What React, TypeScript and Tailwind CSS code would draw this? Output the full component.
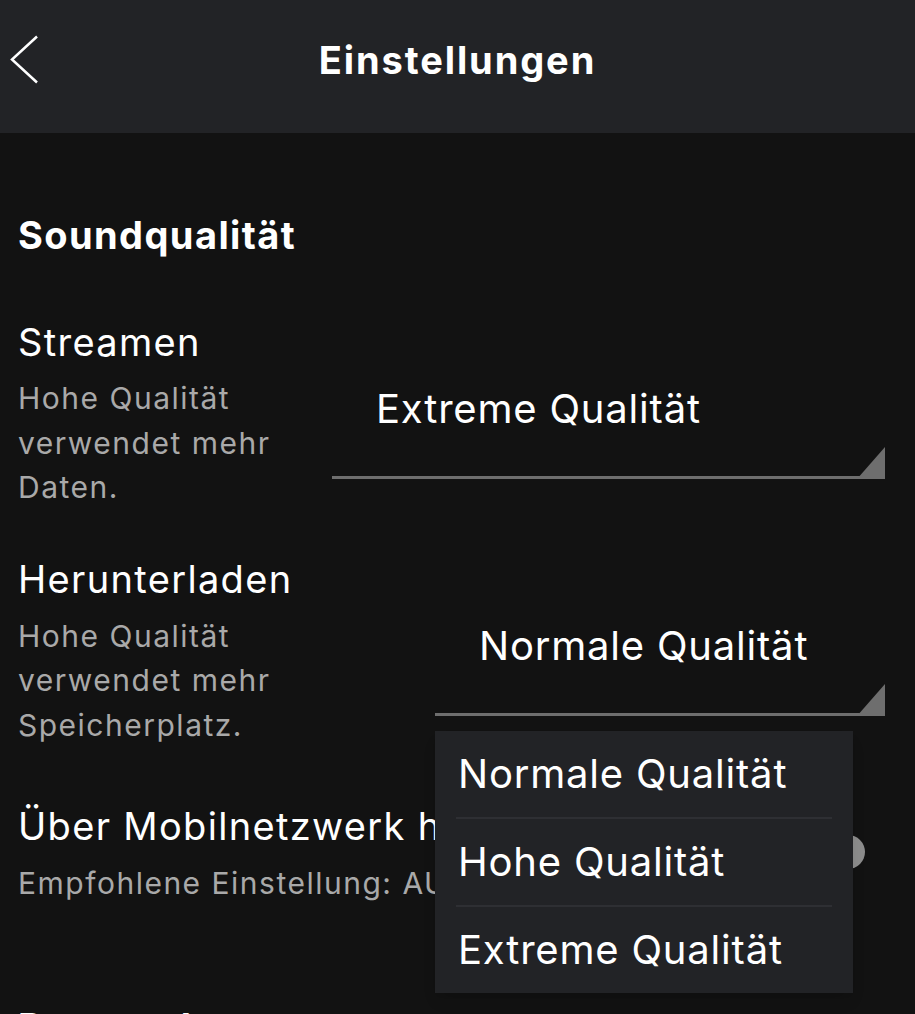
import React from 'react';

const font = { fontFamily: 'Inter, "Noto Sans", sans-serif' };

function Select({ value, width, children }: { value: string; width: string; children?: React.ReactNode }) {
  return (
    <div className={`relative ml-auto mt-[67px] shrink-0 self-start ${width}`}>
      <div className="pl-[44px] text-[40px] leading-[44px] tracking-[0.02em] text-white">{value}</div>
      <div className="h-[45px]" />
      <div className="h-[3px] bg-[#6e6e6e]" />
      <svg className="absolute right-0 bottom-0" width="28" height="32" viewBox="0 0 28 32">
        <polygon points="0,32 28,0 28,32" fill="#6e6e6e" />
      </svg>
      {children}
    </div>
  );
}

function Menu() {
  const items = ['Normale Qualität', 'Hohe Qualität', 'Extreme Qualität'];
  return (
    <div className="absolute left-0 top-[calc(100%+15px)] z-10 w-[418px] bg-[#222326] shadow-lg">
      {items.map((item, i) => (
        <div key={item}>
          {i > 0 && <div className="mx-[21px] h-[2px] bg-[#2e2f33]" />}
          <div className="flex h-[86px] items-center pl-[23px] text-[40px] tracking-[0.02em] text-white">
            {item}
          </div>
        </div>
      ))}
    </div>
  );
}

export default function App() {
  return (
    <div className="min-h-[1014px] overflow-hidden bg-[#121212]" style={font}>
      <header className="relative flex h-[133px] items-center justify-center bg-[#222326]">
        <svg className="absolute left-[9px] top-[35px]" width="30" height="49" viewBox="0 0 30 49">
          <polyline points="28,1.5 3,24.5 28,47.5" fill="none" stroke="#fff" strokeWidth="2.5" />
        </svg>
        <h1 className="mt-[-12px] text-[38px] font-bold tracking-[0.05em] text-white">Einstellungen</h1>
      </header>

      <main className="pl-[18px] pr-[30px]">
        <h2 className="pt-[80px] text-[38px] font-bold leading-[44px] tracking-[0.037em] text-white">
          Soundqualität
        </h2>

        <div className="mt-[63px] flex">
          <div className="w-[300px] shrink-0">
            <div className="text-[38px] leading-[44px] tracking-[0.035em] text-white">Streamen</div>
            <div className="mt-[12px] text-[30px] leading-[44.5px] tracking-[0.05em] text-[#a9a9a9]">
              Hohe Qualität verwendet mehr Daten.
            </div>
          </div>
          <Select value="Extreme Qualität" width="w-[553px]" />
        </div>

        <div className="mt-[47px] flex">
          <div className="w-[300px] shrink-0">
            <div className="text-[38px] leading-[44px] tracking-[0.035em] text-white">Herunterladen</div>
            <div className="mt-[13px] text-[30px] leading-[44.5px] tracking-[0.05em] text-[#a9a9a9]">
              Hohe Qualität verwendet mehr Speicherplatz.
            </div>
          </div>
          <Select value="Normale Qualität" width="w-[450px]">
            <Menu />
          </Select>
        </div>

        <div className="mt-[57px] flex">
          <div className="min-w-0 flex-1 overflow-hidden">
            <div className="whitespace-nowrap text-[38px] leading-[44px] tracking-[0.035em] text-white">
              Über Mobilnetzwerk herunterladen
            </div>
            <div className="mt-[13px] whitespace-nowrap text-[30px] leading-[44px] tracking-[0.05em] text-[#a9a9a9]">
              Empfohlene Einstellung: AUS
            </div>
          </div>
          <div className="ml-4 mr-[20px] mt-[31px] h-[34px] w-[34px] shrink-0 rounded-full bg-[#8c8c8c]" />
        </div>

        <h2 className="mt-[100px] text-[38px] font-bold leading-[44px] tracking-[0.037em] text-white">
          Datenschutz
        </h2>
      </main>
    </div>
  );
}
